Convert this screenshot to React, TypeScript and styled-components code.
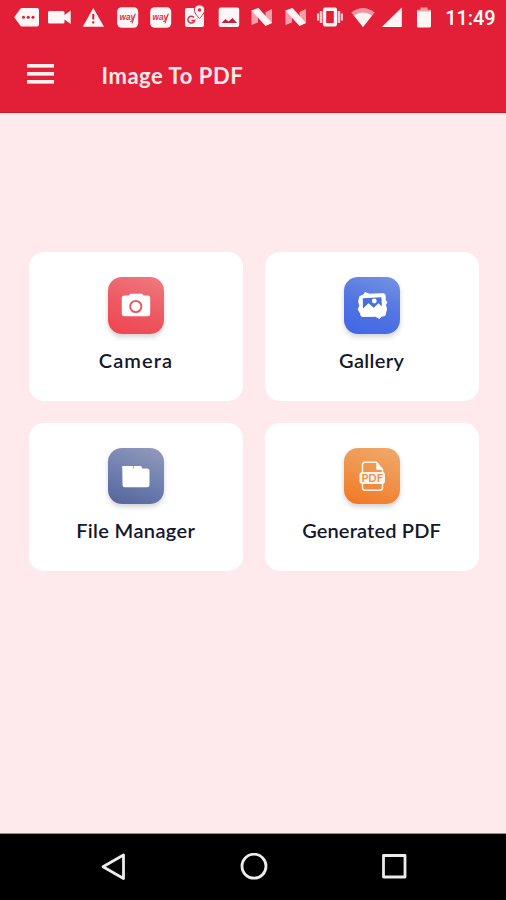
import React from 'react';
import styled, { createGlobalStyle } from 'styled-components';

const GlobalStyle = createGlobalStyle`
  *, *::before, *::after { box-sizing: border-box; }
  body { margin: 0; background: #feeaec; font-family: Lato, 'Open Sans', sans-serif; }
`;

const Screen = styled.div`
  width: 506px;
  height: 900px;
  display: flex;
  flex-direction: column;
  overflow: hidden;
  background: #feeaec;
`;

const StatusBar = styled.div`
  height: 36px;
  flex: none;
  display: flex;
  padding: 5px 0 0 9.7px;
  background: #e21f37;
  color: #fff;
`;

const StatusSlot = styled.span<{ $width?: number }>`
  flex: none;
  width: ${({ $width }) => $width ?? 33.7}px;
  height: 24px;
  display: flex;
  justify-content: center;
`;

const StatusSvg = styled.svg`
  flex: none;
  width: 24px;
  height: 24px;
  overflow: visible;
  fill: #fff5f5;
`;

const Clock = styled.span`
  margin-left: 1px;
  font: 500 20px/26px Roboto, sans-serif;
  letter-spacing: -0.1px;
  white-space: nowrap;
`;

const Toolbar = styled.header`
  height: 77px;
  flex: none;
  display: flex;
  align-items: flex-start;
  padding: 27px 0 0 26.5px;
  background: #e21f37;
  border-bottom: 1px solid #cf1626;
`;

const MenuButton = styled.button`
  width: 27px;
  height: 20px;
  margin-top: 1px;
  padding: 0;
  border: 0;
  background: none;
  display: flex;
  flex-direction: column;
  justify-content: space-between;
`;

const MenuLine = styled.span`
  height: 4px;
  background: #fff0f0;
  border-bottom: 1px solid #f2a3ac;
`;

const Title = styled.h1<{ $tracking: number }>`
  margin: -1px 0 0 48px;
  font-size: 22px;
  line-height: 28px;
  font-weight: 700;
  letter-spacing: ${({ $tracking }) => $tracking}px;
  color: #ffe9ea;
  white-space: nowrap;
`;

const Content = styled.main`
  flex: 1;
  display: grid;
  grid-template-columns: 214px 214px;
  grid-auto-rows: 148.5px;
  justify-content: center;
  align-content: start;
  gap: 22px;
  padding: 139px 0 0 1px;
`;

const Card = styled.button`
  border: 0;
  padding: 25px 0 0;
  border-radius: 15px;
  background: #fff;
  display: flex;
  flex-direction: column;
  align-items: center;
  font-family: inherit;
`;

const Tile = styled.span<{ $from: string; $mid: string; $to: string }>`
  width: 56px;
  height: 56.5px;
  flex: none;
  border-radius: 14px;
  background: linear-gradient(200deg, ${({ $from, $mid, $to }) => `${$from}, ${$mid} 50%, ${$to}`});
  box-shadow: 0 3px 5px rgba(60, 60, 70, 0.22);
`;

const TileSvg = styled.svg`
  display: block;
  width: 56px;
  height: 56px;
`;

const PdfText = styled.text`
  font: 700 10.5px Lato, sans-serif;
`;

const BadgeText = styled.text`
  font: italic 700 9px 'Liberation Sans', sans-serif;
  fill: #d83249;
`;

const Label = styled.span<{ $tracking: number }>`
  margin-top: 13px;
  font-size: 20px;
  line-height: 26px;
  font-weight: 600;
  letter-spacing: ${({ $tracking }) => $tracking}px;
  margin-right: -${({ $tracking }) => $tracking}px;
  color: #14182a;
  white-space: nowrap;
`;

const NavBar = styled.nav`
  height: 67px;
  flex: none;
  display: flex;
  justify-content: center;
  gap: 112px;
  padding: 19px 0 0 1px;
  background: #000;
  border-top: 1px solid #9b8f91;
`;

const NavSvg = styled.svg`
  width: 28px;
  height: 28px;
  fill: none;
  stroke: #ececec;
  stroke-width: 2.8;
  stroke-linejoin: round;
`;

const NougatIcon = () => (
  <StatusSvg viewBox="0 0 24 24">
    <path opacity=".6" d="M1.500 5.500 8 3.500V17.500l-6.500 2.500zM15.500 7 22 4v14l-6.500 2.500z" />
    <path d="M1.500 5.500 8.500 3 22 18 15.500 21z" />
  </StatusSvg>
);

const BadgeIcon = () => (
  <StatusSvg viewBox="0 0 24 24">
    <rect x="1.200" y="2.200" width="21" height="20.600" rx="4.500" />
    <BadgeText x="3.500" y="15.200" textLength="15.500" lengthAdjust="spacingAndGlyphs">way</BadgeText>
    <path d="M19.300 8.500 16 18.500" stroke="#d83249" strokeWidth="1" />
  </StatusSvg>
);

const StatusIcons = () => (
  <>
    <StatusSlot>
      <StatusSvg viewBox="0 0 24 24">
        <path d="M7 3h15q2 0 2 2v14.500q0 2-2 2H7q-1.200 0-2-1.200L-.8 12.200 5 4.200Q5.800 3 7 3z" />
        <g fill="#d02038">
          <circle cx="8.500" cy="12.300" r="1.500" />
          <circle cx="13.200" cy="12.300" r="1.500" />
          <circle cx="18" cy="12.300" r="1.500" />
        </g>
      </StatusSvg>
    </StatusSlot>
    <StatusSlot>
      <StatusSvg viewBox="0 0 24 24">
        <path d="M1.500 6h13.500q1.500 0 1.500 1.500V10L22.700 5.500v13.500L16.500 14.500V17q0 1.500-1.500 1.500H1.500Q0 18.500 0 17V7.500Q0 6 1.500 6z" />
      </StatusSvg>
    </StatusSlot>
    <StatusSlot>
      <StatusSvg viewBox="0 0 24 24">
        <path d="M11.300 3 22 21.700H.8z" />
        <path d="M11.300 9v5.500M11.300 16.200v2.400" stroke="#d02038" strokeWidth="2" />
      </StatusSvg>
    </StatusSlot>
    <StatusSlot><BadgeIcon /></StatusSlot>
    <StatusSlot><BadgeIcon /></StatusSlot>
    <StatusSlot>
      <StatusSvg viewBox="0 0 24 24">
        <rect x="2" y="3" width="19" height="19" rx="2" />
        <path d="M4 21 20 9" stroke="#efb7bd" strokeWidth="1" />
        <path d="M11 12.500a3.400 3.400 0 1 0 .6 3H8.500" fill="none" stroke="#d83249" strokeWidth="1.500" />
        <path
          d="M16.500 0c-3 0-5.200 2-5.200 5 0 3.500 5.200 8.500 5.200 8.500S21.700 8.500 21.700 5c0-3-2.200-5-5.200-5z"
          stroke="#d83249"
          strokeWidth="1"
        />
        <circle cx="16.500" cy="5" r="1.800" fill="#d83249" />
      </StatusSvg>
    </StatusSlot>
    <StatusSlot>
      <StatusSvg viewBox="0 0 24 24">
        <rect x="1.700" y="2.500" width="20.500" height="19.500" rx="2" />
        <path d="M4.500 18 8.500 14l3 2.500 4-3.500 4.500 5z" fill="#c82038" />
      </StatusSvg>
    </StatusSlot>
    <StatusSlot><NougatIcon /></StatusSlot>
    <StatusSlot><NougatIcon /></StatusSlot>
    <StatusSlot>
      <StatusSvg viewBox="0 0 24 24">
        <path
          fillRule="evenodd"
          d="M7 2.500h10q2 0 2 2v15q0 2-2 2H7q-2 0-2-2v-15q0-2 2-2zM8.200 6v12h7.600V6z"
        />
        <path d="M1.800 6h2.600v12H1.800zM19.600 6h2.600v12H19.600zM-1 8.500H1.200v7H-1zM22.800 8.500H25v7h-2.200z" opacity=".8" />
      </StatusSvg>
    </StatusSlot>
    <StatusSlot>
      <StatusSvg viewBox="0 0 24 24">
        <path opacity=".55" d="M.3 7.500Q12 -1.500 23.700 7.500L12 22z" />
        <path d="M3 10.500Q12 4.500 21 10.500L12 22z" />
      </StatusSvg>
    </StatusSlot>
    <StatusSlot $width={24}>
      <StatusSvg viewBox="0 0 24 24">
        <path d="M21.800 2.500V22H1.800z" />
      </StatusSvg>
    </StatusSlot>
    <StatusSlot $width={40}>
      <StatusSvg viewBox="0 0 24 24">
        <path opacity=".6" d="M8.500 2.500h7v2.200H19v3H5v-3h3.500z" />
        <path d="M5 6.500h14V21q0 1.500-1.500 1.500h-11Q5 22.500 5 21z" />
      </StatusSvg>
    </StatusSlot>
  </>
);

const CameraIcon = () => (
  <TileSvg viewBox="0 0 56 56" fill="#fff">
    <path d="M17 18.500h4l1.200-1.800h12l1.300 1.800H39.500q2.700 0 2.700 2.700v15.300q0 2.700-2.700 2.700H16.500q-2.700 0-2.700-2.700V21.200q0-2.700 3.200-2.700z" />
    <circle cx="27.800" cy="29.500" r="5.600" fill="none" stroke="#e75560" strokeWidth="1.900" />
  </TileSvg>
);

const GalleryIcon = () => (
  <TileSvg viewBox="0 0 56 56" fill="#fff">
    <path
      d="M21 15.500 25.500 17.200 39.500 16.700Q41.500 17 41.300 19.500L41.200 22.500 42.700 25.500 41.500 28 42.500 32 41 38.500 37.500 39.300 35.500 41.500 31.500 39.300 18.500 39.500Q16.300 39 16.500 36.500L14.300 32.500 15.700 28.500 14.600 24.500 15.800 19.500 19.500 18z"
      stroke="#fff"
      strokeLinejoin="round"
    />
    <path d="M18.800 21.300 37.500 20.300 37.800 29.500 34.500 26.300 29.800 30.800 24.500 26.300 19 31.500z" fill="#4a6fdb" />
    <circle cx="30.300" cy="24" r="2.400" />
  </TileSvg>
);

const FolderIcon = () => (
  <TileSvg viewBox="0 0 56 56" fill="#fff">
    <path d="M14.300 18h11v3H14.300zM26 18h7.200l1.300 3H26z" />
    <path d="M14.300 20.500H39q2.500 0 2.500 2.500v13.700q0 2.500-2.500 2.500H17q-2.500 0-2.500-2.500z" />
  </TileSvg>
);

const PdfIcon = () => (
  <TileSvg viewBox="0 0 56 56" fill="none">
    <path
      d="M32.500 14.300H21q-2.500 0-2.500 2.500v23q0 2.500 2.500 2.500h15q2.500 0 2.500-2.500V21.500z"
      stroke="#fff4e8"
      strokeWidth="1.500"
      strokeLinejoin="round"
    />
    <path d="M32.300 14.500v7.200h6.500z" fill="#fff" />
    <rect x="15.500" y="24" width="25.500" height="12" rx="3" fill="#fff6ef" />
    <PdfText x="17.500" y="33.800" fill="#f0924d" textLength="21.500" lengthAdjust="spacingAndGlyphs">PDF</PdfText>
  </TileSvg>
);

const actions = [
  { label: 'Camera', tracking: 1.1, colors: ['#f07b80', '#ec5b65', '#f0444f'], Icon: CameraIcon },
  { label: 'Gallery', tracking: 0.35, colors: ['#7594e2', '#5275e2', '#4066e6'], Icon: GalleryIcon },
  { label: 'File Manager', tracking: 0.35, colors: ['#959bba', '#7080b0', '#54649b'], Icon: FolderIcon },
  { label: 'Generated PDF', tracking: 0.15, colors: ['#efab6b', '#f09249', '#f37620'], Icon: PdfIcon },
];

export default function App() {
  return (
    <Screen>
      <GlobalStyle />
      <StatusBar>
        <StatusIcons />
        <Clock>11:49</Clock>
      </StatusBar>
      <Toolbar>
        <MenuButton aria-label="Menu">
          <MenuLine />
          <MenuLine />
          <MenuLine />
        </MenuButton>
        <Title $tracking={0.55}>Image To PDF</Title>
      </Toolbar>
      <Content>
        {actions.map(({ label, tracking, colors, Icon }) => (
          <Card key={label}>
            <Tile $from={colors[0]} $mid={colors[1]} $to={colors[2]}>
              <Icon />
            </Tile>
            <Label $tracking={tracking}>{label}</Label>
          </Card>
        ))}
      </Content>
      <NavBar>
        <NavSvg viewBox="0 0 28 28"><path d="M23.500 2v23.500L3 13.800z" /></NavSvg>
        <NavSvg viewBox="0 0 28 28"><circle cx="14" cy="13.200" r="12" /></NavSvg>
        <NavSvg viewBox="0 0 28 28"><rect x="3.500" y="2.500" width="21.500" height="21.500" /></NavSvg>
      </NavBar>
    </Screen>
  );
}
